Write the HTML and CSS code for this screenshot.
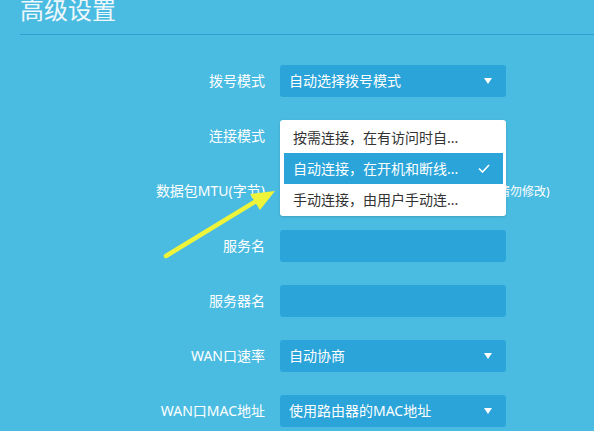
FILE: index.html
```html
<!DOCTYPE html>
<html lang="zh-CN">
<head>
<meta charset="utf-8">
<title>高级设置</title>
<link rel="stylesheet" href="styles.css">
</head>
<body>
<div class="page">
  <h1 class="title">高级设置</h1>
  <div class="form">
    <div class="row">
      <span class="lbl">拨号模式</span>
      <div class="field select">自动选择拨号模式<span class="caret"></span></div>
    </div>
    <div class="row">
      <span class="lbl">连接模式</span>
      <div class="field-wrap">
        <div class="field select">自动连接，在开机和断线...<span class="caret"></span></div>
        <ul class="menu">
          <li class="opt">按需连接，在有访问时自...</li>
          <li class="opt selected">自动连接，在开机和断线...
            <svg class="check" width="12" height="9" viewBox="0 0 12 9"><polyline points="1,4.5 4.5,8 11,1" fill="none" stroke="#ffffff" stroke-width="1.6"/></svg>
          </li>
          <li class="opt">手动连接，由用户手动连...</li>
        </ul>
      </div>
    </div>
    <div class="row">
      <span class="lbl">数据包MTU(字节)</span>
      <div class="field short"></div>
      <span class="hint">(默认是1480，如非必要，请勿修改)</span>
    </div>
    <div class="row">
      <span class="lbl">服务名</span>
      <div class="field"></div>
    </div>
    <div class="row">
      <span class="lbl">服务器名</span>
      <div class="field"></div>
    </div>
    <div class="row">
      <span class="lbl">WAN口速率</span>
      <div class="field select">自动协商<span class="caret"></span></div>
    </div>
    <div class="row">
      <span class="lbl">WAN口MAC地址</span>
      <div class="field select">使用路由器的MAC地址<span class="caret"></span></div>
    </div>
  </div>
  <svg class="pointer" width="594" height="431" viewBox="0 0 594 431">
    <line x1="166" y1="256" x2="258" y2="200" stroke="#eef43a" stroke-width="4.5" stroke-linecap="round"/>
    <polygon points="275,191 250,194 260,210" fill="#eef43a"/>
  </svg>
</div>
</body>
</html>
```
FILE: styles.css
```css
html, body {
  margin: 0;
  padding: 0;
}
body {
  background: #4bbce1;
  font-family: "Noto Sans", "Noto Sans CJK SC", sans-serif;
  color: #ffffff;
  overflow: hidden;
}
.page {
  position: relative;
  width: 594px;
  height: 431px;
  overflow: hidden;
}
.title {
  margin: -2px 0 0 20px;
  padding: 0 0 12px 0;
  font-size: 24px;
  line-height: 24px;
  font-weight: normal;
  color: #eef8fc;
  border-bottom: 1px solid #2f9fd2;
}
.form {
  display: flex;
  flex-direction: column;
  gap: 23px;
  padding-top: 30px;
}
.row {
  display: flex;
  align-items: center;
  height: 32px;
}
.lbl {
  width: 280px;
  padding-right: 15px;
  box-sizing: border-box;
  text-align: right;
  font-size: 14px;
  line-height: 32px;
  white-space: nowrap;
}
.field-wrap {
  position: relative;
}
.field {
  width: 226px;
  height: 32px;
  box-sizing: border-box;
  background: #2aa4d9;
  border-radius: 3px;
  padding: 0 9px;
  font-size: 14px;
  line-height: 32px;
  display: flex;
  align-items: center;
  justify-content: space-between;
  white-space: nowrap;
}
.field.short {
  width: 73px;
}
.caret {
  width: 0;
  height: 0;
  border-left: 4px solid transparent;
  border-right: 4px solid transparent;
  border-top: 6px solid #ffffff;
  margin-right: 5px;
}
.hint {
  margin-left: 6px;
  font-size: 12px;
  white-space: nowrap;
}
.menu {
  position: absolute;
  left: 0;
  top: 0;
  width: 226px;
  box-sizing: border-box;
  margin: 0;
  padding: 2px 3px 1px 4px;
  list-style: none;
  background: #ffffff;
  border-radius: 3px;
  box-shadow: 0 1px 3px rgba(0, 0, 0, 0.15);
  z-index: 2;
}
.opt {
  height: 31px;
  line-height: 31px;
  padding: 0 13px 0 9px;
  font-size: 14px;
  color: #333333;
  display: flex;
  align-items: center;
  justify-content: space-between;
  white-space: nowrap;
}
.opt.selected {
  background: #2aa4d9;
  color: #ffffff;
}
.check {
  display: block;
}
.pointer {
  position: absolute;
  left: 0;
  top: 0;
  pointer-events: none;
  z-index: 3;
}
```
